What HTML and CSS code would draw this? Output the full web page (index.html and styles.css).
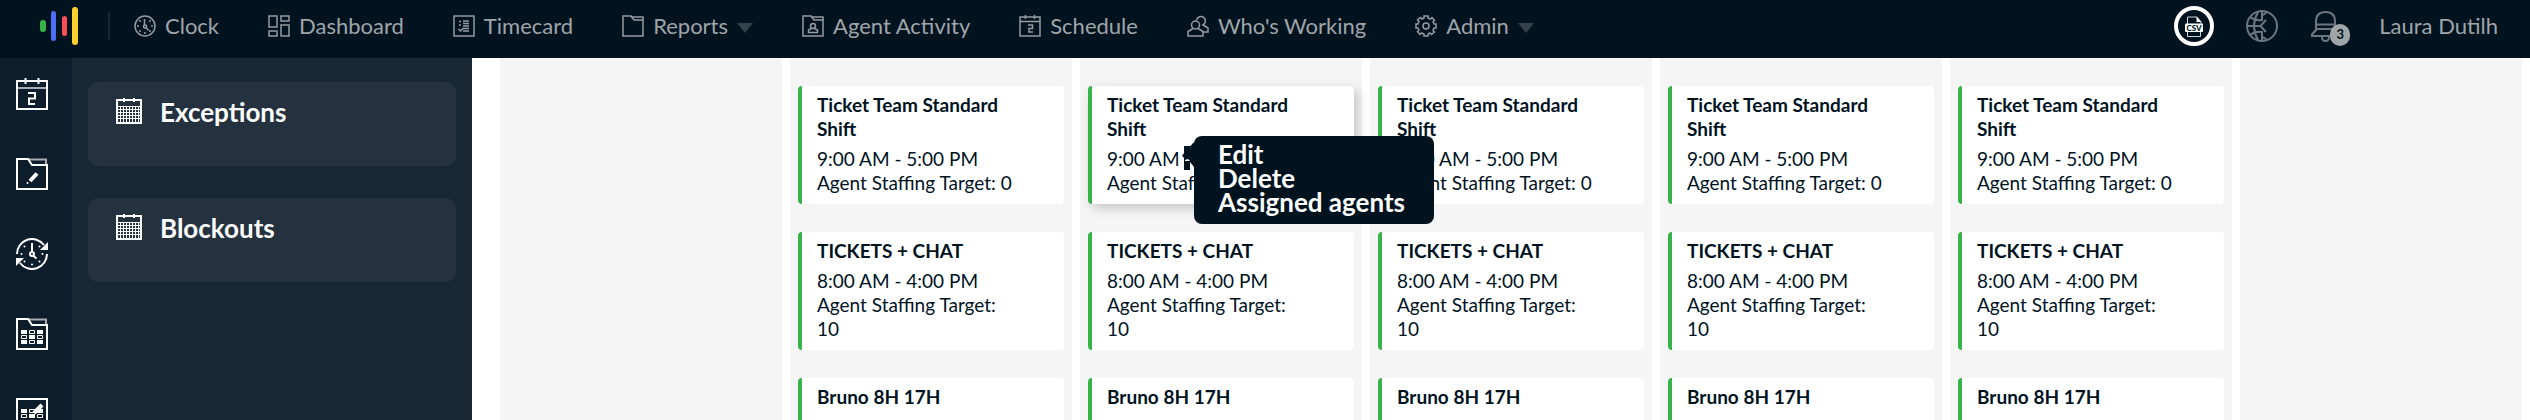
FILE: index.html
```html
<!DOCTYPE html>
<html lang="en">

<head>
    <meta charset="UTF-8">
    <meta name="viewport" content="width=device-width, initial-scale=1.0">
    <title>Schedule</title>
    <link rel="stylesheet" href="styles.css">
</head>

<body>
    <header class="topbar">
        <a href="#" class="logo" aria-label="Home">
            <svg width="38" height="38" viewBox="0 0 38 38">
                <rect x="0" y="13" width="6" height="12" rx="3" fill="#37b34a" />
                <rect x="11" y="4" width="5" height="30" rx="2.5" fill="#4c6ef5" />
                <rect x="22" y="9" width="5" height="20" rx="2.5" fill="#fa4d56" />
                <rect x="32" y="0" width="6" height="38" rx="3" fill="#ffd12e" />
            </svg>
        </a>
        <nav class="nav">
            <a href="#" class="nav-item">
                <svg class="nav-icon" viewBox="0 0 22 22">
                    <circle cx="11" cy="11" r="10" />
                    <path d="M10.5 4v6.5M12 12.5l2.5 3" />
                    <circle cx="11" cy="11.5" r="1.5" />
                    <path class="dots" d="M4 11h0M18 11h0M11 18h0M6 6h0M16 6h0M6 16h0M16 16h0" />
                </svg>
                Clock
            </a>
            <a href="#" class="nav-item">
                <svg class="nav-icon" viewBox="0 0 22 22">
                    <path d="M1 1h8v11H1zM13 1h8v5h-8zM1 16h8v5H1zM13 10h8v11h-8z" />
                </svg>
                Dashboard
            </a>
            <a href="#" class="nav-item">
                <svg class="nav-icon" viewBox="0 0 22 22">
                    <path d="M1 1h20v20H1z" />
                    <path d="M6 6.5h2M6 10h2M10 6h6M10 8.5h6M10 11h6M10 13.5h6M10 16h6M5.5 14l2 2 3-3" />
                </svg>
                Timecard
            </a>
            <a href="#" class="nav-item">
                <svg class="nav-icon" viewBox="0 0 22 22">
                    <path d="M1 1h8l3 4h9v16H1z" />
                    <path d="M9 2h12v3" />
                </svg>
                Reports
                <svg class="caret" viewBox="0 0 16 10"><path d="M0 0h16l-8 10z" /></svg>
            </a>
            <a href="#" class="nav-item">
                <svg class="nav-icon" viewBox="0 0 22 22">
                    <path d="M1 1h8l3 4h9v16H1z" />
                    <path d="M9 2h12v3" />
                    <circle cx="11" cy="11" r="2.5" />
                    <path d="M9.5 13.5L6.5 15v2.5h9V15l-3-1.5" />
                </svg>
                Agent Activity
            </a>
            <a href="#" class="nav-item">
                <svg class="nav-icon" viewBox="0 0 22 22">
                    <path d="M1 2h20v19H1zM1 6.5h20M6.5 0v4M15.5 0v4" />
                    <path d="M9 10h4.5v3.5H10V17h4" />
                </svg>
                Schedule
            </a>
            <a href="#" class="nav-item">
                <svg class="nav-icon" viewBox="0 0 22 22">
                    <circle cx="8.5" cy="10" r="4" />
                    <path d="M6 13.5L1 16.5V21h15v-4.5l-5-3" />
                    <path d="M9.5 5A4.5 4.5 0 1 1 16 10l5 3v4h-5" />
                </svg>
                Who's Working
            </a>
            <a href="#" class="nav-item">
                <svg class="nav-icon" viewBox="0 0 22 22">
                    <path d="M9 1h4v2l2.5 1L17 2.500l2.500 3L18 7l1 2h2v4h-2l-1 2.500 1.500 1.500-3 2.500L15 18l-2 1v2H9v-2l-2.500-1L5 19.500l-2.500-3L4 15l-1-2H1V9h2l1-2.500L2.500 5l3-2.500L7 4l2-1z" />
                    <circle cx="11" cy="11" r="3" />
                </svg>
                Admin
                <svg class="caret" viewBox="0 0 16 10"><path d="M0 0h16l-8 10z" /></svg>
            </a>
        </nav>
        <div class="tools">
            <button type="button" class="tool" aria-label="Export CSV">
                <svg width="40" height="40" viewBox="0 0 40 40">
                    <circle cx="20" cy="20" r="18" fill="none" stroke="#fff" stroke-width="4" />
                    <path d="M13.5 18v-7H23l4 5v2M13.5 26v4.5h13V26" fill="none" stroke="#cfd3d6" />
                    <path d="M22.5 10.5v5.5h5z" fill="#fff" />
                    <rect x="11" y="17.5" width="18" height="8.5" rx="1" fill="#fff" />
                    <text x="20" y="24.5" class="csv-text">CSV</text>
                </svg>
            </button>
            <button type="button" class="tool" aria-label="Language">
                <svg class="tool-icon" width="32" height="32" viewBox="0 0 32 32">
                    <circle cx="16" cy="16" r="15" />
                    <path d="M16 1v10M16 21v10M1 16h13M4 7q5 4 12 3M4 25q5-4 12-3M12 2q-8 14 0 28M20 10l-5.5 6 5.5 6M17 5l4-3M17 27l4 3" />
                </svg>
            </button>
            <button type="button" class="tool bell" aria-label="Notifications">
                <svg class="tool-icon" width="32" height="32" viewBox="0 0 32 32">
                    <path d="M6 15v-3.5Q6 2 15.5 2T25 11.5V19l4 7H2v-1.5l4-4.5zM6 14.5h19M6 19h19" />
                    <path d="M12 27q0 4 3.5 4t3.5-4" />
                </svg>
                <span class="badge">3</span>
            </button>
            <a href="#" class="user">Laura Dutilh</a>
        </div>
    </header>

    <div class="page">
        <nav class="rail">
            <a href="#" aria-label="Calendar">
                <svg class="rail-icon" viewBox="0 0 32 32">
                    <path d="M1 3h30v28H1zM9.5 0v6M22.5 0v6" />
                    <path class="soft" d="M2 10h28" />
                    <path d="M12 15h7v5.5h-6V26h6" />
                </svg>
            </a>
            <a href="#" aria-label="Edit folder">
                <svg class="rail-icon" viewBox="0 0 32 32">
                    <path class="soft" d="M12 1.5h18V6" />
                    <path d="M1 1h11l4 6h15v24H1z" />
                    <path d="M14 23l7-7.5" class="thick" />
                    <path class="dots" d="M11.5 25h0" />
                </svg>
            </a>
            <a href="#" aria-label="Time changes">
                <svg class="rail-icon" viewBox="0 0 32 32">
                    <path d="M1 16A15 15 0 0 1 28 7M31 16A15 15 0 0 1 4 25" />
                    <path class="fill" d="M32 4v8h-8zM0 28v-8h8z" />
                    <path d="M16 5v9M17 17.5l3.5 3" />
                    <circle cx="16" cy="16" r="2" />
                    <path class="dots" d="M5.5 16h0M26.5 16h0M16 26.5h0M8.5 8.5h0M23.5 8.5h0M8.5 23.5h0M23.5 23.5h0" />
                </svg>
            </a>
            <a href="#" aria-label="Shift folder">
                <svg class="rail-icon" viewBox="0 0 32 32">
                    <path class="soft" d="M12 1.5h18V6" />
                    <path d="M1 1h11l4 6h15v24H1z" />
                    <path class="fill" d="M5 12h6v4H5zM21 12h6v4h-6zM13 17h6v4h-6zM5 22h6v4H5zM21 22h6v4h-6z" />
                    <path class="thin" d="M13.5 12.5h5v3h-5zM5.5 17.5h5v3h-5zM21.5 17.5h5v3h-5zM13.5 22.5h5v3h-5z" />
                </svg>
            </a>
            <a href="#" aria-label="Shift templates">
                <svg class="rail-icon" viewBox="0 0 32 32">
                    <path d="M1 1h30v30H1z" />
                    <path class="fill" d="M5 11h6v4H5zM21 11h6v4h-6zM13 16h6v4h-6z" />
                    <path class="thin" d="M13.5 11.5h5v3h-5zM5.5 16.5h5v3h-5zM21.5 16.5h5v3h-5z" />
                    <path class="thick" d="M18 15l8-8" />
                </svg>
            </a>
        </nav>

        <aside class="panel">
            <a href="#" class="panel-card">
                <svg class="panel-icon" viewBox="0 0 26 26">
                    <path d="M1 2h24v23H1zM8 0v4M18 0v4" />
                    <path class="thin" d="M1 8.5h24M1 11.5h24M1 14.5h24M1 17.5h24M1 20.5h24M4.5 8v17M7.5 8v17M10.5 8v17M13.5 8v17M16.5 8v17M19.5 8v17M22.5 8v17" />
                </svg>
                Exceptions
            </a>
            <a href="#" class="panel-card">
                <svg class="panel-icon" viewBox="0 0 26 26">
                    <path d="M1 2h24v23H1zM8 0v4M18 0v4" />
                    <path class="thin" d="M1 8.5h24M1 11.5h24M1 14.5h24M1 17.5h24M1 20.5h24M4.5 8v17M7.5 8v17M10.5 8v17M13.5 8v17M16.5 8v17M19.5 8v17M22.5 8v17" />
                </svg>
                Blockouts
            </a>
        </aside>

        <main class="board">
            <section class="day"></section>
            <section class="day">
                <article class="shift">
                    <h3>Ticket Team Standard Shift</h3>
                    <p>9:00 AM - 5:00 PM</p>
                    <p>Agent Staffing Target: 0</p>
                </article>
                <article class="shift">
                    <h3>TICKETS + CHAT</h3>
                    <p>8:00 AM - 4:00 PM</p>
                    <p>Agent Staffing Target: 10</p>
                </article>
                <article class="shift">
                    <h3>Bruno 8H 17H</h3>
                </article>
            </section>
            <section class="day">
                <article class="shift active">
                    <h3>Ticket Team Standard Shift</h3>
                    <p>9:00 AM - 5:00 PM</p>
                    <p>Agent Staffing Target: 0</p>
                    <div class="menu">
                        <svg class="menu-arrow" viewBox="0 0 12 30">
                            <path d="M12 1L0 14.5 2 17v12h6v-8l4 5z" />
                            <path d="M2 5h6v8H2z" />
                            <path class="notch" d="M3 19l3-1 2 2H3z" />
                        </svg>
                        <button type="button">Edit</button>
                        <button type="button">Delete</button>
                        <button type="button">Assigned agents</button>
                    </div>
                </article>
                <article class="shift">
                    <h3>TICKETS + CHAT</h3>
                    <p>8:00 AM - 4:00 PM</p>
                    <p>Agent Staffing Target: 10</p>
                </article>
                <article class="shift">
                    <h3>Bruno 8H 17H</h3>
                </article>
            </section>
            <section class="day">
                <article class="shift">
                    <h3>Ticket Team Standard Shift</h3>
                    <p>9:00 AM - 5:00 PM</p>
                    <p>Agent Staffing Target: 0</p>
                </article>
                <article class="shift">
                    <h3>TICKETS + CHAT</h3>
                    <p>8:00 AM - 4:00 PM</p>
                    <p>Agent Staffing Target: 10</p>
                </article>
                <article class="shift">
                    <h3>Bruno 8H 17H</h3>
                </article>
            </section>
            <section class="day">
                <article class="shift">
                    <h3>Ticket Team Standard Shift</h3>
                    <p>9:00 AM - 5:00 PM</p>
                    <p>Agent Staffing Target: 0</p>
                </article>
                <article class="shift">
                    <h3>TICKETS + CHAT</h3>
                    <p>8:00 AM - 4:00 PM</p>
                    <p>Agent Staffing Target: 10</p>
                </article>
                <article class="shift">
                    <h3>Bruno 8H 17H</h3>
                </article>
            </section>
            <section class="day">
                <article class="shift">
                    <h3>Ticket Team Standard Shift</h3>
                    <p>9:00 AM - 5:00 PM</p>
                    <p>Agent Staffing Target: 0</p>
                </article>
                <article class="shift">
                    <h3>TICKETS + CHAT</h3>
                    <p>8:00 AM - 4:00 PM</p>
                    <p>Agent Staffing Target: 10</p>
                </article>
                <article class="shift">
                    <h3>Bruno 8H 17H</h3>
                </article>
            </section>
            <section class="day"></section>
        </main>
    </div>
</body>

</html>
```
FILE: styles.css
```css
* {
    box-sizing: border-box;
    margin: 0;
    padding: 0;
}
body {
    display: flex;
    flex-direction: column;
    height: 100vh;
    overflow: hidden;
    font-family: Lato, "Liberation Sans", sans-serif;
    color: #00131f;
    background-color: #fff;
}
a {
    color: inherit;
    text-decoration: none;
}
button {
    font: inherit;
    color: inherit;
    background: none;
    border: 0;
    cursor: pointer;
}
svg {
    display: block;
    flex-shrink: 0;
}

/* top bar */
.topbar {
    display: flex;
    align-items: center;
    flex-shrink: 0;
    padding: 4px 32px 10px 40px;
    background-color: #00131f;
    color: #a0a5aa;
    font-size: 22px;
    line-height: 44px;
    white-space: nowrap;
}
.nav {
    display: flex;
    align-items: center;
    gap: 49px;
    height: 28px;
    margin-left: 30px;
    padding-left: 24px;
    border-left: 2px solid #192835;
}
.nav-item {
    display: flex;
    align-items: center;
    gap: 9px;
}
.nav-icon {
    width: 22px;
    height: 22px;
    fill: none;
    stroke: #969ba1;
    stroke-width: 1.5;
}
.dots {
    stroke-linecap: round;
    stroke-width: 2;
}
.caret {
    width: 16px;
    height: 10px;
    margin-top: 4px;
    fill: #33414c;
}
.tools {
    display: flex;
    align-items: center;
    gap: 32px;
    margin-left: auto;
}
.csv-text {
    font-size: 8px;
    font-weight: 900;
    text-anchor: middle;
    fill: #00131f;
}
.tool-icon {
    fill: none;
    stroke: #6c7681;
    stroke-width: 2;
}
.bell {
    position: relative;
    margin-right: 5px;
}
.badge {
    position: absolute;
    right: -8px;
    bottom: -4px;
    width: 20px;
    height: 22px;
    border-radius: 10px;
    background-color: #a0a5aa;
    color: #00131f;
    font-size: 13px;
    font-weight: 700;
    line-height: 20px;
}

/* left side */
.page {
    display: flex;
    flex: 1;
    min-height: 0;
    overflow: hidden;
}
.rail {
    display: flex;
    flex-direction: column;
    gap: 48px;
    padding: 20px 24px 0 16px;
    background-color: #0d1d2b;
}
.rail-icon {
    width: 32px;
    height: 32px;
    fill: none;
    stroke: #fff;
    stroke-width: 2;
}
.rail-icon .soft {
    stroke: #a8aeb4;
}
.rail-icon .thick {
    stroke-width: 4;
}
.rail-icon .thin,
.panel-icon .thin {
    stroke-width: 1;
}
.rail-icon .fill {
    fill: #fff;
    stroke: none;
}
.panel {
    display: flex;
    flex-direction: column;
    gap: 32px;
    flex: 0 0 400px;
    padding: 24px 16px;
    background-color: #192835;
}
.panel-card {
    display: flex;
    align-items: flex-start;
    gap: 18px;
    min-height: 84px;
    padding: 16px 28px;
    border-radius: 10px;
    background-color: #243240;
    color: #fff;
    font-size: 26px;
    font-weight: 700;
    line-height: 28px;
}
.panel-icon {
    width: 26px;
    height: 26px;
    fill: none;
    stroke: #fff;
    stroke-width: 2;
}

/* schedule */
.board {
    display: grid;
    grid-template-columns: repeat(7, 1fr);
    gap: 8px;
    flex: 1;
    padding: 0 8px 0 28px;
}
.day {
    display: flex;
    flex-direction: column;
    gap: 28px;
    padding: 28px 8px 0;
    background-color: #f5f5f5;
}
.shift {
    position: relative;
    flex-shrink: 0;
    min-height: 118px;
    padding: 7px 48px 9px 15px;
    border-left: 4px solid #37b34a;
    border-radius: 4px;
    background-color: #fff;
    font-size: 19px;
    line-height: 24px;
}
.shift h3 {
    margin-bottom: 6px;
    font-size: 19px;
    font-weight: 700;
}
.shift.active {
    z-index: 1;
    box-shadow: 4px 4px 12px rgba(0, 0, 0, 0.2);
}

/* shift menu */
.menu {
    position: absolute;
    top: 50px;
    left: 102px;
    display: flex;
    flex-direction: column;
    align-items: flex-start;
    width: 240px;
    padding: 6px 24px 10px;
    border-radius: 8px;
    background-color: #00131f;
    color: #fff;
    font-size: 26px;
    font-weight: 700;
    white-space: nowrap;
}
.menu button {
    line-height: 24px;
}
.menu-arrow {
    position: absolute;
    top: 5px;
    left: -12px;
    width: 12px;
    height: 30px;
    fill: #00131f;
}
.menu-arrow .notch {
    fill: #fff;
}
```
